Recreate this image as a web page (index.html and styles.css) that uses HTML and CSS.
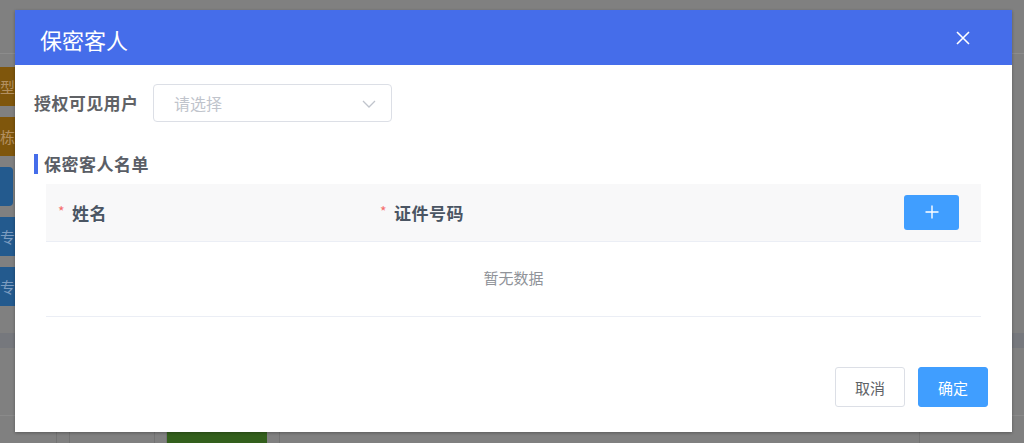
FILE: index.html
```html
<!DOCTYPE html>
<html lang="zh-CN">
<head>
<meta charset="utf-8">
<title>保密客人</title>
<link rel="stylesheet" href="styles.css">
</head>
<body>
<div class="page">
  <div class="topbar"></div>
  <div class="side">
    <div class="sbtn orange">典型</div>
    <div class="sbtn orange">楼栋</div>
    <div class="sbtn blue round"></div>
    <div class="sbtn blue">专</div>
    <div class="sbtn blue">专</div>
  </div>
  <div class="band"></div>
  <div class="line"></div>
  <div class="bottomrow">
    <div class="cell c1"></div>
    <div class="cell c2"></div>
    <div class="cell c3"></div>
    <div class="cell c4"></div>
    <div class="cell green"></div>
    <div class="cell c5"></div>
    <div class="cell c6"></div>
    <div class="cell c7"></div>
  </div>
</div>

<div class="modal">
  <div class="modal-header">
    <span class="modal-title">保密客人</span>
    <svg class="close" width="14" height="14" viewBox="0 0 14 14"><path d="M1 1L13 13M13 1L1 13" stroke="#fff" stroke-width="1.6" fill="none"/></svg>
  </div>
  <div class="modal-body">
    <div class="form-row">
      <label class="form-label">授权可见用户</label>
      <div class="select">
        <span class="placeholder">请选择</span>
        <svg class="chev" width="14" height="8" viewBox="0 0 14 8"><path d="M1 1L7 7L13 1" stroke="#c0c4cc" stroke-width="1.3" fill="none"/></svg>
      </div>
    </div>
    <div class="section-title">保密客人名单</div>
    <div class="table">
      <div class="thead">
        <div class="th col-name"><span class="req">*</span>姓名</div>
        <div class="th col-id"><span class="req">*</span>证件号码</div>
        <div class="th col-op">
          <button class="add-btn"><svg width="14" height="14" viewBox="0 0 14 14"><path d="M7 0.5V13.5M0.5 7H13.5" stroke="#fff" stroke-width="1.4"/></svg></button>
        </div>
      </div>
      <div class="empty">暂无数据</div>
    </div>
  </div>
  <div class="modal-footer">
    <button class="btn btn-default">取消</button>
    <button class="btn btn-primary">确定</button>
  </div>
</div>
</body>
</html>
```
FILE: styles.css
```css
* { box-sizing: border-box; }
html, body { margin: 0; padding: 0; }
body {
  width: 1024px;
  height: 443px;
  overflow: hidden;
  background: #808080;
  font-family: "Noto Sans CJK SC", "Noto Sans", sans-serif;
  position: relative;
}
.page {
  width: 1024px;
  height: 443px;
  display: flex;
  flex-direction: column;
}
.topbar {
  height: 54px;
  border-bottom: 1px solid #8c8c8c;
  flex: none;
}
.side {
  display: flex;
  flex-direction: column;
  gap: 11px;
  margin-top: 13px;
  width: 40px;
}
.sbtn {
  height: 39px;
  width: 40px;
  font-size: 15px;
  line-height: 39px;
  overflow: hidden;
  white-space: nowrap;
  direction: rtl;
  padding-right: 25px;
}
.sbtn.orange { background: #7f560c; color: #b39060; }
.sbtn.blue { background: #235a8e; color: #7d9cc0; }
.sbtn.round { border-radius: 0 4px 4px 0; width: 13px; padding: 0; }
.band {
  margin-top: 27px;
  height: 15px;
  background: #76787d;
  flex: none;
}
.line {
  margin-top: 67px;
  height: 1px;
  background: #8a8a8a;
  flex: none;
}
.bottomrow {
  margin-top: 16px;
  display: flex;
  height: 12px;
  flex: none;
}
.cell { border-right: 1px solid #737373; height: 100%; }
.c1 { width: 57px; }
.c2 { width: 13px; }
.c3 { width: 85px; }
.c4 { width: 12px; }
.green { width: 100px; background: #335f1c; border-right: none; }
.c5 { width: 13px; }
.c6 { width: 640px; }
.c7 { flex: 1; border-right: none; }

.modal {
  position: absolute;
  left: 15px;
  top: 10px;
  width: 997px;
  height: 422px;
  background: #fff;
  box-shadow: 0 1px 3px rgba(0,0,0,0.3);
  display: flex;
  flex-direction: column;
}
.modal-header {
  height: 55px;
  background: #456dea;
  display: flex;
  align-items: center;
  justify-content: space-between;
  padding: 0 42px 0 25px;
  flex: none;
}
.modal-title {
  color: #fff;
  font-size: 22px;
  line-height: 26px;
  margin-top: 3px;
}
.close { margin-top: 1px; }
.modal-body {
  padding: 19px 31px 0 19px;
  flex: 1;
}
.form-row {
  display: flex;
  align-items: center;
}
.form-label {
  font-size: 17px;
  letter-spacing: 0.4px;
  font-weight: bold;
  color: #606266;
  width: 119px;
  line-height: 38px;
}
.select {
  width: 239px;
  height: 38px;
  border: 1px solid #dcdfe6;
  border-radius: 4px;
  display: flex;
  align-items: center;
  justify-content: space-between;
  padding: 0 15px 0 20px;
}
.placeholder {
  color: #c0c4cc;
  font-size: 16px;
}
.chev { margin-top: 1px; }
.section-title {
  margin-top: 32px;
  border-left: 4px solid #456dea;
  padding-left: 6px;
  font-size: 17px;
  letter-spacing: 0.5px;
  font-weight: bold;
  color: #5a5e66;
  line-height: 20px;
  height: 20px;
}
.table {
  margin: 10px 0 0 12px;
}
.thead {
  display: flex;
  align-items: center;
  height: 58px;
  background: #f8f8f9;
  border-bottom: 1px solid #ebeef5;
}
.th {
  font-size: 17px;
  letter-spacing: 0.5px;
  font-weight: bold;
  color: #4a5563;
  display: flex;
  align-items: center;
}
.req {
  color: #f56c6c;
  font-weight: normal;
  font-size: 14px;
  margin-right: 7px;
  margin-top: -4px;
}
.col-name { width: 322px; padding-left: 12px; }
.col-id { flex: 1; padding-left: 12px; }
.col-op { width: 100px; justify-content: flex-start; padding-left: 23px; }
.add-btn {
  width: 55px;
  height: 35px;
  border: none;
  border-radius: 3px;
  background: #409eff;
  display: flex;
  align-items: center;
  justify-content: center;
  padding: 0;
  margin-top: -1px;
}
.empty {
  height: 75px;
  border-bottom: 1px solid #ebeef5;
  display: flex;
  align-items: center;
  justify-content: center;
  color: #909399;
  font-size: 15px;
  padding-bottom: 3px;
}
.modal-footer {
  display: flex;
  justify-content: flex-end;
  gap: 13px;
  padding: 0 24px 25px 0;
  flex: none;
}
.btn {
  width: 70px;
  height: 40px;
  border-radius: 3px;
  font-size: 15px;
  font-family: "Noto Sans CJK SC", "Noto Sans", sans-serif;
  padding: 0;
}
.btn-default {
  background: #fff;
  border: 1px solid #dcdfe6;
  color: #606266;
}
.btn-primary {
  background: #409eff;
  border: 1px solid #409eff;
  color: #fff;
}
```
